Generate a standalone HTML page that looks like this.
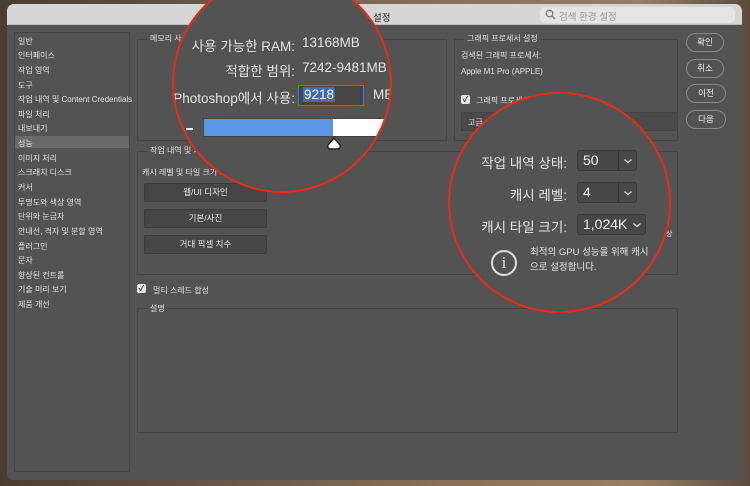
<!DOCTYPE html>
<html><head><meta charset="utf-8"><style>
*{margin:0;padding:0;box-sizing:border-box}
body{width:750px;height:486px;overflow:hidden;position:relative;background:linear-gradient(90deg,#4a3d32 0%,#6a5646 30%,#8a7058 60%,#9a7e62 85%,#5b4c40 100%);font-family:"Liberation Sans","Noto Sans CJK KR",sans-serif;color:#e6e6e6}
.a{position:absolute}
.win{left:7px;top:4px;width:735px;height:476px;background:#535353;border-radius:7px;overflow:hidden}
.title{left:0;top:0;width:735px;height:21px;background:#d6d6d6;border-bottom:1px solid #bbb}
.t{position:absolute;font-size:8px;white-space:nowrap;color:#e2e2e2}
.box{position:absolute;border:1px solid #454545}
.side .t{left:3px}
.btn{position:absolute;background:#464646;border:1px solid #3d3d3d;border-radius:2px;font-size:8.5px;text-align:center;color:#e8e8e8}
.pill{position:absolute;border:1px solid #8a8a8a;border-radius:10px;font-size:8.5px;text-align:center;line-height:17px;color:#eee}
.cb{position:absolute;width:9px;height:9px;background:#e8e8e8;border-radius:2px;color:#333;font-size:8px;line-height:9px;text-align:center;font-weight:bold}
.circ{position:absolute;border-radius:50%;border:2.5px solid #ec2a14;overflow:hidden;background:#535353}
.L{position:absolute;font-size:13.5px;color:#e4e4e4;white-space:nowrap}
.dd{position:absolute;background:#474747;border:1px solid #3a3a3a;border-radius:3px;font-size:14px;color:#f0f0f0;padding-left:5px;line-height:19px}
.chev{position:absolute;width:10px;height:6px}
</style></head><body>
<div class="a win">
 <div class="a title"></div>
 <div class="t" style="left:366px;top:6px;color:#222;font-size:9.5px">설정</div>
 <div class="a" style="left:533px;top:3px;width:195px;height:16px;background:#e4e4e4;border-radius:5px"></div>
 <svg class="a" style="left:538px;top:5px" width="11" height="11" viewBox="0 0 11 11"><circle cx="4.5" cy="4.5" r="3.3" fill="none" stroke="#777" stroke-width="1.2"/><path d="M7 7L10 10" stroke="#777" stroke-width="1.3"/></svg>
 <div class="t" style="left:552px;top:5px;color:#999;font-size:9.5px">검색 환경 설정</div>

 <div class="box side" style="left:7px;top:28px;width:116px;height:440px;border-color:#444">
  <div class="a" style="left:0;top:103px;width:114px;height:12px;background:#6a6a6a"></div>
  <div class="t" style="top:3px">일반</div>
  <div class="t" style="top:17px">인터페이스</div>
  <div class="t" style="top:32px">작업 영역</div>
  <div class="t" style="top:47px">도구</div>
  <div class="t" style="top:61px">작업 내역 및 Content Credentials</div>
  <div class="t" style="top:76px">파일 처리</div>
  <div class="t" style="top:90px">내보내기</div>
  <div class="t" style="top:105px">성능</div>
  <div class="t" style="top:120px">이미지 처리</div>
  <div class="t" style="top:134px">스크래치 디스크</div>
  <div class="t" style="top:149px">커서</div>
  <div class="t" style="top:164px">투명도와 색상 영역</div>
  <div class="t" style="top:178px">단위와 눈금자</div>
  <div class="t" style="top:193px">안내선, 격자 및 분할 영역</div>
  <div class="t" style="top:208px">플러그인</div>
  <div class="t" style="top:222px">문자</div>
  <div class="t" style="top:237px">향상된 컨트롤</div>
  <div class="t" style="top:251px">기술 미리 보기</div>
  <div class="t" style="top:266px">제품 개선</div>
 </div>

 <div class="box" style="left:130px;top:35px;width:310px;height:102px"></div>
 <div class="t" style="left:140px;top:29px;background:#535353;padding:0 3px">메모리 사용</div>

 <div class="box" style="left:447px;top:35px;width:224px;height:102px"></div>
 <div class="t" style="left:457px;top:29px;background:#535353;padding:0 3px">그래픽 프로세서 설정</div>
 <div class="t" style="left:454px;top:46px">검색된 그래픽 프로세서:</div>
 <div class="t" style="left:454px;top:63px">Apple M1 Pro (APPLE)</div>
 <div class="cb" style="left:454px;top:91px">✓</div>
 <div class="t" style="left:469px;top:91px">그래픽 프로세서 사용</div>
 <div class="a" style="left:454px;top:108px;width:217px;height:19px;background:#4a4a4a;border:1px solid #444"></div>
 <div class="t" style="left:461px;top:113px">고급</div>

 <div class="pill" style="left:679px;top:29px;width:38px;height:19px">확인</div>
 <div class="pill" style="left:679px;top:55px;width:38px;height:19px">취소</div>
 <div class="pill" style="left:679px;top:80px;width:40px;height:19px">이전</div>
 <div class="pill" style="left:679px;top:106px;width:40px;height:19px">다음</div>

 <div class="box" style="left:130px;top:147px;width:541px;height:124px"></div>
 <div class="t" style="left:140px;top:141px;background:#535353;padding:0 3px">작업 내역 및 캐시</div>
 <div class="t" style="left:135px;top:163px">캐시 레벨 및 타일 크기 기본값:</div>
 <div class="btn" style="left:137px;top:179px;width:123px;height:19px;line-height:17px">웹/UI 디자인</div>
 <div class="btn" style="left:137px;top:205px;width:123px;height:19px;line-height:17px">기본/사진</div>
 <div class="btn" style="left:137px;top:231px;width:123px;height:19px;line-height:17px">거대 픽셀 치수</div>
 <div class="t" style="left:659px;top:225px;font-size:7px">상</div>

 <div class="cb" style="left:130px;top:280px">✓</div>
 <div class="t" style="left:146px;top:281px">멀티 스레드 합성</div>
 <div class="box" style="left:130px;top:304px;width:541px;height:125px"></div>
 <div class="t" style="left:141px;top:299px;background:#535353;padding:0 2px">설명</div>
</div>

<div class="circ" style="left:172px;top:-27px;width:220px;height:220px">
 <div class="L" style="right:95px;top:60px">사용 가능한 RAM:</div>
 <div class="L" style="left:128px;top:60px">13168MB</div>
 <div class="L" style="right:95px;top:85px">적합한 범위:</div>
 <div class="L" style="left:128px;top:85px">7242-9481MB</div>
 <div class="L" style="right:95px;top:112px">Photoshop에서 사용:</div>
 <div class="a" style="left:124px;top:110px;width:66px;height:21px;background:#454545;border:1.5px solid #3a7bd5"></div>
 <div class="L" style="left:129px;top:112px;background:#3a6fb8;color:#fff;padding:0 1px">9218</div>
 <div class="L" style="left:199px;top:112px">MB</div>
 <div class="a" style="left:12px;top:153px;width:7px;height:2px;background:#eee"></div>
 <div class="a" style="left:29px;top:143px;width:190px;height:19px;background:#fff;border:1px solid #444"></div>
 <div class="a" style="left:30px;top:144px;width:129px;height:17px;background:#5b97e6"></div>
 <svg class="a" style="left:152px;top:162px" width="16" height="14" viewBox="0 0 16 14"><path d="M8 1 L14 8 Q15 12 11 12 L5 12 Q1 12 2 8 Z" fill="#fff" stroke="#222" stroke-width="1.5"/></svg>
</div>

<div class="circ" style="left:448px;top:92px;width:223px;height:221px">
 <div class="L" style="right:102px;top:58px">작업 내역 상태:</div>
 <div class="dd" style="left:127px;top:56px;width:60px;height:21px">50</div>
 <div class="a" style="left:168px;top:57px;width:1px;height:19px;background:#333"></div>
 <svg class="chev" style="left:173px;top:64px" viewBox="0 0 10 6"><path d="M1.5 1.5L5 4.5L8.5 1.5" fill="none" stroke="#ddd" stroke-width="1.3"/></svg>
 <div class="L" style="right:102px;top:90px">캐시 레벨:</div>
 <div class="dd" style="left:127px;top:88px;width:60px;height:21px">4</div>
 <div class="a" style="left:168px;top:89px;width:1px;height:19px;background:#333"></div>
 <svg class="chev" style="left:173px;top:96px" viewBox="0 0 10 6"><path d="M1.5 1.5L5 4.5L8.5 1.5" fill="none" stroke="#ddd" stroke-width="1.3"/></svg>
 <div class="L" style="right:102px;top:122px">캐시 타일 크기:</div>
 <div class="dd" style="left:127px;top:120px;width:69px;height:21px">1,024K</div>
 <svg class="chev" style="left:182px;top:128px" viewBox="0 0 10 6"><path d="M1.5 1.5L5 4.5L8.5 1.5" fill="none" stroke="#ddd" stroke-width="1.3"/></svg>
 <div class="a" style="left:41px;top:156px;width:26px;height:26px;border:2px solid #ddd;border-radius:50%;text-align:center;font-size:17px;line-height:22px;color:#ddd;font-family:'Liberation Serif',serif">i</div>
 <div class="L" style="left:80px;top:150px;font-size:9.5px">최적의 GPU 성능을 위해 캐시</div>
 <div class="L" style="left:80px;top:165px;font-size:9.5px">으로 설정합니다.</div>
</div>
</body></html>
